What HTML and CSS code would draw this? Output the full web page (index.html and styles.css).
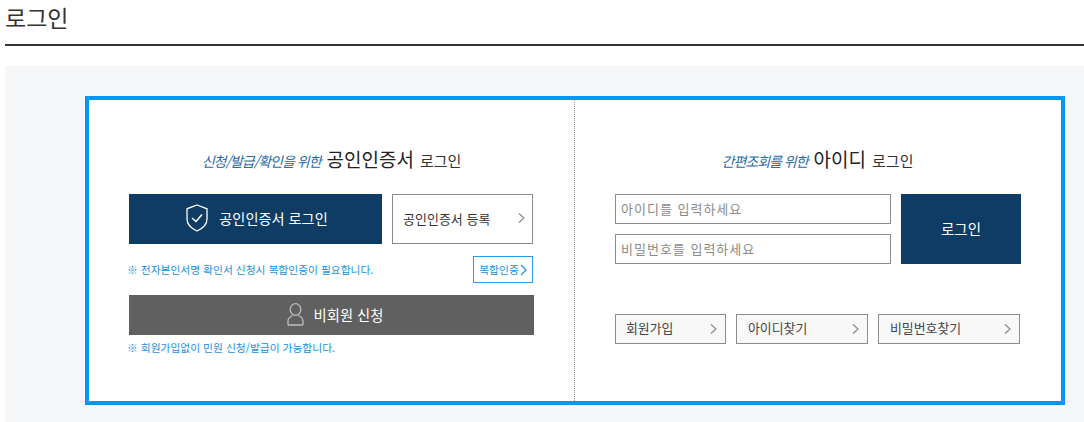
FILE: index.html
```html
<!DOCTYPE html>
<html lang="ko">
<head>
<meta charset="utf-8">
<title>로그인</title>
<link rel="stylesheet" href="styles.css">
</head>
<body>
<h1 class="page-title">로그인</h1>
<main class="panel">
  <div class="box">
    <section class="col col-left">
      <h2 class="heading"><em>신청/발급/확인을 위한</em> <strong>공인인증서</strong> <span>로그인</span></h2>
      <div class="row-cert">
        <a class="btn-cert" href="#">
          <svg class="ico-shield" width="22" height="28" viewBox="0 0 22 28" fill="none" stroke="#fff" stroke-width="1.300"><path d="M11 1 L21 4.800 V15 C21 20.500 16 24.800 11 27 C6 24.800 1 20.500 1 15 V4.800 Z"/><path d="M6 14 L10 17.500 L16 10.500" stroke-width="1.500"/></svg>
          <span>공인인증서 로그인</span>
        </a>
        <a class="btn-reg" href="#"><span>공인인증서 등록</span><svg class="chev" width="7" height="10" viewBox="0 0 7 10" fill="none" stroke="#8c8c8c" stroke-width="1.200"><path d="M1 .5 L6 5 L1 9.500"/></svg></a>
      </div>
      <div class="row-note">
        <p class="note">※ 전자본인서명 확인서 신청시 복합인증이 필요합니다.</p>
        <a class="btn-multi" href="#">복합인증<svg width="7" height="12" viewBox="0 0 7 12" fill="none" stroke="#0f95e8" stroke-width="1.200"><path d="M1 1 L6 6 L1 11"/></svg></a>
      </div>
      <a class="btn-guest" href="#">
        <svg width="17" height="23" viewBox="0 0 17 23" fill="none" stroke="#bdbdbd" stroke-width="1.300"><ellipse cx="8.500" cy="6.500" rx="5.300" ry="5.800"/><path d="M1 22 V18 C1 15 3.500 13.500 5.500 12.500 M16 22 V18 C16 15 13.500 13.500 11.500 12.500 M1 22 H16"/></svg>
        <span>비회원 신청</span>
      </a>
      <p class="note note-guest">※ 회원가입없이 민원 신청/발급이 가능합니다.</p>
    </section>
    <section class="col col-right">
      <h2 class="heading"><em>간편조회를 위한</em> <strong>아이디</strong> <span>로그인</span></h2>
      <form class="row-login">
        <div class="inputs">
          <input class="field" type="text" placeholder="아이디를 입력하세요">
          <input class="field" type="password" placeholder="비밀번호를 입력하세요">
        </div>
        <button class="btn-login" type="button">로그인</button>
      </form>
      <nav class="links">
        <a class="link link-join" href="#"><span>회원가입</span><svg class="chev" width="7" height="10" viewBox="0 0 7 10" fill="none" stroke="#8c8c8c" stroke-width="1.200"><path d="M1 .5 L6 5 L1 9.500"/></svg></a>
        <a class="link link-id" href="#"><span>아이디찾기</span><svg class="chev" width="7" height="10" viewBox="0 0 7 10" fill="none" stroke="#8c8c8c" stroke-width="1.200"><path d="M1 .5 L6 5 L1 9.500"/></svg></a>
        <a class="link link-pw" href="#"><span>비밀번호찾기</span><svg class="chev" width="7" height="10" viewBox="0 0 7 10" fill="none" stroke="#8c8c8c" stroke-width="1.200"><path d="M1 .5 L6 5 L1 9.500"/></svg></a>
      </nav>
    </section>
  </div>
</main>
</body>
</html>
```
FILE: styles.css
```css
* { box-sizing: border-box; }
html, body { margin: 0; padding: 0; }
body {
  width: 1084px;
  height: 422px;
  overflow: hidden;
  padding-left: 5px;
  background: #fff;
  color: #333;
  font-family: "Noto Sans CJK KR", "Noto Sans", sans-serif;
}
a { text-decoration: none; color: inherit; }
.page-title {
  margin: 0;
  height: 46px;
  padding-top: 1px;
  border-bottom: 2px solid #333;
  font-size: 23px;
  line-height: 32px;
  font-weight: 400;
  color: #333;
}
.panel {
  margin-top: 20px;
  height: 356px;
  padding: 30px 19px 0 80px;
  background: #f6f7f9;
}
.box {
  display: flex;
  width: 980px;
  height: 309px;
  border: 4px solid #0098f7;
  background: #fff;
}
.col { padding-left: 40px; }
.col-left {
  width: 486px;
  border-right: 1px dotted #999;
}
.col-right { flex: 1; }
.heading {
  display: flex;
  justify-content: center;
  align-items: baseline;
  gap: 6px;
  width: 405px;
  height: 24px;
  margin: 47px 0 0;
  font-size: 15px;
  line-height: 24px;
  font-weight: 400;
  color: #333;
}
.heading em { font-size: 14px; letter-spacing: -1px; color: #2a6aa8; }
.heading strong { font-size: 19px; font-weight: 400; color: #222; }
.row-cert { display: flex; gap: 10px; margin-top: 23px; }
.btn-cert {
  display: flex;
  justify-content: center;
  align-items: center;
  gap: 11px;
  width: 253px;
  height: 50px;
  padding: 0 0 2px 3px;
  background: #0f3c64;
  color: #fff;
  font-size: 14.200px;
}
.btn-reg {
  display: flex;
  justify-content: space-between;
  align-items: center;
  width: 141px;
  height: 50px;
  padding: 0 7px 2px 10px;
  border: 1px solid #8c8c8c;
  font-size: 13px;
}
.row-note {
  display: flex;
  justify-content: space-between;
  align-items: center;
  width: 404px;
  height: 27px;
  margin-top: 12px;
}
.note {
  margin: 0 0 0 -2px;
  font-size: 10.750px;
  line-height: 16px;
  color: #1b8fe0;
}
.btn-multi {
  display: flex;
  align-items: center;
  justify-content: center;
  gap: 1px;
  width: 60px;
  height: 27px;
  border: 1px solid #2b9bec;
  font-size: 10.750px;
  color: #1b8fe0;
}
.btn-guest {
  display: flex;
  justify-content: center;
  align-items: center;
  gap: 10px;
  width: 405px;
  height: 40px;
  margin-top: 12px;
  padding: 0 0 2px 7px;
  background: #606060;
  color: #fff;
  font-size: 14.300px;
}
.note-guest { margin-top: 5px; }
.row-login { display: flex; gap: 10px; margin-top: 23px; }
.inputs { display: flex; flex-direction: column; gap: 10px; }
.field {
  width: 276px;
  height: 30px;
  padding: 0 5px 2px;
  border: 1px solid #8c8c8c;
  border-radius: 0;
  outline: none;
  font-family: inherit;
  font-size: 13px;
  letter-spacing: 1px;
}
.field::placeholder { color: #8a8a8a; opacity: 1; }
.btn-login {
  width: 120px;
  height: 70px;
  padding: 0 0 2px;
  border: 0;
  background: #0f3c64;
  color: #fff;
  font-family: inherit;
  font-size: 14.500px;
}
.links { display: flex; gap: 10px; margin-top: 50px; }
.link {
  display: flex;
  justify-content: space-between;
  align-items: center;
  height: 30px;
  padding: 0 8px 0 10px;
  border: 1px solid #8c8c8c;
  background: #f8f8f8;
  color: #444;
  font-size: 12.900px;
}
.link span { margin-bottom: 3px; }
.link-join { width: 111px; }
.link-id { width: 132px; padding-left: 11px; }
.link-pw { width: 142px; padding-left: 11px; }
```
